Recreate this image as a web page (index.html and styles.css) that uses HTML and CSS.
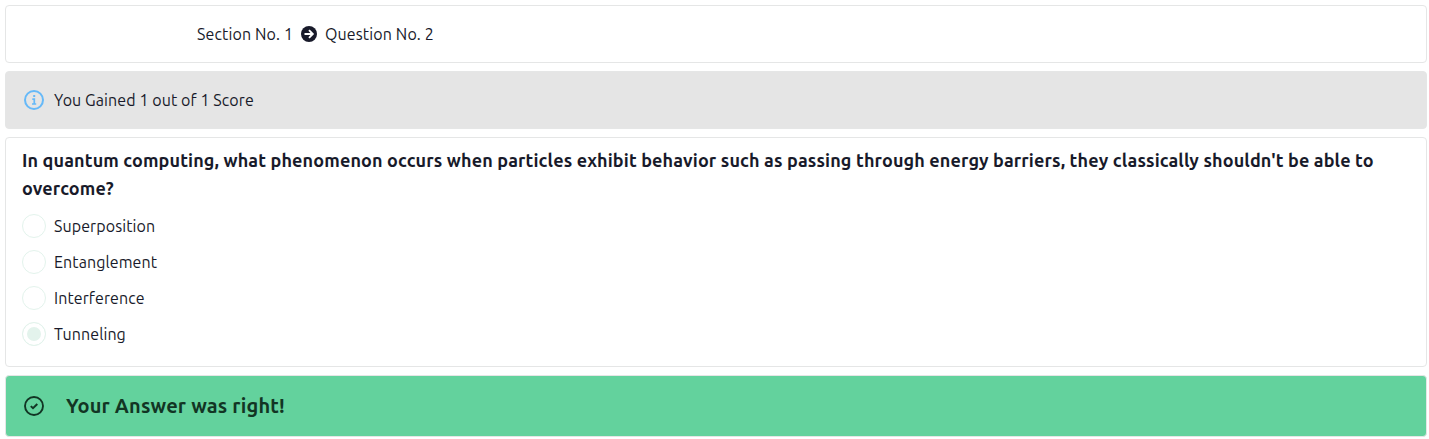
FILE: index.html
```html
<!DOCTYPE html>
<html lang="en">
<head>
<meta charset="utf-8">
<title>Question result</title>
<link rel="stylesheet" href="styles.css">
</head>
<body>
<main class="page">
  <header class="card crumbs">
    <span class="crumb-section">Section No. 1</span>
    <svg class="arrow" viewBox="0 0 16 16"><circle cx="8" cy="8" r="8" fill="#181a2a"/><path d="M3.5 8h8M8 4.2 11.8 8 8 11.8" fill="none" stroke="#fff" stroke-width="1.9"/></svg>
    <span>Question No. 2</span>
  </header>
  <section class="card score">
    <svg class="icon" viewBox="0 0 24 24" fill="none" stroke="#66b9f8"><circle cx="12" cy="12" r="9" stroke-width="2"/><path d="M10.3 11.2h2v5M10 16h4.2" stroke-width="1.7"/><path d="M11.2 8h2" stroke-width="2"/></svg>
    <span>You Gained 1 out of 1 Score</span>
  </section>
  <section class="card question">
    <h1 class="title">In quantum computing, what phenomenon occurs when particles exhibit behavior such as passing through energy barriers, they classically shouldn't be able to overcome?</h1>
    <ul class="options">
      <li class="option"><span class="radio"></span><span>Superposition</span></li>
      <li class="option"><span class="radio"></span><span>Entanglement</span></li>
      <li class="option"><span class="radio"></span><span>Interference</span></li>
      <li class="option"><span class="radio checked"></span><span>Tunneling</span></li>
    </ul>
  </section>
  <section class="card result">
    <svg class="icon" viewBox="0 0 24 24" fill="none" stroke="#123524"><circle cx="12" cy="12" r="9" stroke-width="1.9"/><path d="m8.8 12.1 2.2 2.1 4.3-4.2" stroke-width="2"/></svg>
    <strong class="result-text">Your Answer was right!</strong>
  </section>
</main>
</body>
</html>
```
FILE: styles.css
```css
* { box-sizing: border-box; }
body {
  margin: 0;
  background: #fff;
  color: #181a2a;
  font: 16px/24px Ubuntu, "Noto Sans", sans-serif;
  letter-spacing: 0.09px;
}
.page {
  display: flex;
  flex-direction: column;
  gap: 8px;
  padding: 5px 2px 2px 5px;
}
.card {
  border: 1px solid #e5e6e6;
  border-radius: 4px;
  background: #fff;
}
.crumbs {
  display: flex;
  align-items: center;
  gap: 8px;
  height: 58px;
  padding-left: 191px;
  white-space: nowrap;
  letter-spacing: 0.13px;
}
.crumb-section { width: 96px; }
.arrow { flex: none; width: 16px; height: 16px; }
.score {
  display: flex;
  align-items: center;
  gap: 8px;
  height: 58px;
  padding-left: 16px;
  background: #e5e5e5;
}
.icon { flex: none; width: 24px; height: 24px; }
.question { height: 230px; padding: 8px 16px; }
.title {
  margin: 0;
  font-size: 18px;
  line-height: 28px;
  font-weight: 700;
  letter-spacing: 0.13px;
}
.options {
  display: flex;
  flex-direction: column;
  gap: 12px;
  margin: 12px 0 0;
  padding: 0;
  list-style: none;
}
.option {
  display: flex;
  gap: 8px;
  height: 24px;
}
.radio {
  flex: none;
  width: 24px;
  height: 24px;
  border: 1px solid #e3f3ec;
  border-radius: 50%;
}
.checked {
  background: #e3f3ec;
  box-shadow: inset 0 0 0 4px #fff;
}
.result {
  display: flex;
  align-items: center;
  gap: 20px;
  height: 62px;
  padding-left: 16px;
  background: #63d29d;
  color: #123524;
}
.result-text { font-size: 20px; line-height: 28px; letter-spacing: 0.17px; }
```
